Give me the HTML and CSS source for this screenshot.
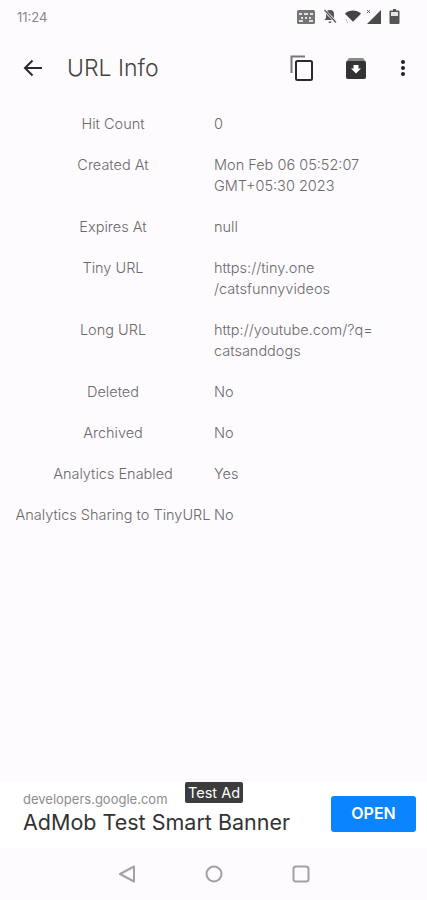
FILE: index.html
```html
<!DOCTYPE html>
<html lang="en">
<head>
  <meta charset="UTF-8">
  <meta name="viewport" content="width=device-width, initial-scale=1.0">
  <title>URL Info</title>
  <link rel="stylesheet" href="styles.css">
</head>
<body>
  <div class="screen">
    <div class="status-bar">
      <span class="clock">11:24</span>
      <div class="status-icons">
        <svg width="18" height="14" viewBox="0 0 18 14"><rect x="0" y="0" width="18" height="14" rx="1.5" fill="#757575"/><path d="M2 3h3v2H2zM7 3h4v2H7zM13 3h3v2h-3zM4 7h2v2H4zM8 7h2v2H8zM12 7h2v2h-2zM2 10h4v2H2zM12 10h4v2h-4z" fill="#e0e0e0"/></svg>
        <svg width="14" height="15" viewBox="0 0 14 15"><path d="M7 1a4 4 0 0 1 4 4v4l1.6 2H1.400L3 9V5a4 4 0 0 1 4-4zM5.500 12.500h3a1.500 1.500 0 0 1-3 0z" fill="#555"/><path d="M1 1l12 12" stroke="#fefbfe" stroke-width="2.600"/><path d="M1.500 1l11.500 12.500" stroke="#555" stroke-width="1.200"/></svg>
        <svg width="16" height="14" viewBox="0 0 17 14"><path d="M0 3.500a12 12 0 0 1 17 0L8.500 12z" fill="#444"/><path d="M1 10h1v1H1zM2 12.500h1v1H2z" fill="#777"/></svg>
        <svg class="signal" width="15" height="15" viewBox="0 0 15 15"><path d="M15 1v14H1z" fill="#4a4a4a"/><path d="M1 1l3 3M4 1L1 4" stroke="#666" stroke-width="1"/></svg>
        <svg width="11" height="15" viewBox="0 0 10 15"><path d="M3.500 0h3v1.500H9a1 1 0 0 1 1 1V14a1 1 0 0 1-1 1H1a1 1 0 0 1-1-1V2.500a1 1 0 0 1 1-1h2.500z" fill="#555"/><rect x="1.500" y="3" width="7" height="4" fill="#e6e6e6"/></svg>
      </div>
    </div>

    <div class="toolbar">
      <svg class="back" width="20" height="18" viewBox="0 0 20 18"><path d="M19 9H2M9.500 1.500L2 9l7.500 7.500" fill="none" stroke="#2b2b2b" stroke-width="2"/></svg>
      <h1>URL Info</h1>
      <div class="actions">
        <svg width="24" height="26" viewBox="0 0 24 26"><path d="M1.500 18V1.500H15" fill="none" stroke="#777" stroke-width="2"/><rect x="6" y="6" width="16" height="19" rx="1.500" fill="none" stroke="#2a2a2a" stroke-width="2"/></svg>
        <svg width="20" height="21" viewBox="0 0 20 21"><path d="M3 0h14l3 4H0z" fill="#8a8a8a"/><rect x="0" y="3" width="20" height="18" rx="2" fill="#333"/><path d="M7.500 7h5v3.500H15L10 15.500 5 10.500h2.500z" fill="#fff"/></svg>
        <svg class="more" width="6" height="18" viewBox="0 0 6 18"><circle cx="3" cy="3" r="2" fill="#222"/><circle cx="3" cy="9" r="2" fill="#222"/><circle cx="3" cy="15" r="2" fill="#222"/></svg>
      </div>
    </div>

    <div class="info-list">
      <div class="info-row"><div class="info-label">Hit Count</div><div class="info-value">0</div></div>
      <div class="info-row"><div class="info-label">Created At</div><div class="info-value">Mon Feb 06 05:52:07<br>GMT+05:30 2023</div></div>
      <div class="info-row"><div class="info-label">Expires At</div><div class="info-value">null</div></div>
      <div class="info-row"><div class="info-label">Tiny URL</div><div class="info-value">https://tiny.one<br>/catsfunnyvideos</div></div>
      <div class="info-row"><div class="info-label">Long URL</div><div class="info-value">http://youtube.com/?q=<br>catsanddogs</div></div>
      <div class="info-row"><div class="info-label">Deleted</div><div class="info-value">No</div></div>
      <div class="info-row"><div class="info-label">Archived</div><div class="info-value">No</div></div>
      <div class="info-row"><div class="info-label">Analytics Enabled</div><div class="info-value">Yes</div></div>
      <div class="info-row"><div class="info-label">Analytics Sharing to TinyURL</div><div class="info-value">No</div></div>
    </div>

    <div class="ad-banner">
      <span class="ad-badge">Test Ad</span>
      <div class="ad-text">
        <div class="ad-domain">developers.google.com</div>
        <div class="ad-title">AdMob Test Smart Banner</div>
      </div>
      <div class="ad-open">OPEN</div>
    </div>

    <div class="nav-bar">
      <svg width="18" height="18" viewBox="0 0 18 18"><path d="M16 1.500v15L2 9z" fill="none" stroke="#a2a2a2" stroke-width="2" stroke-linejoin="round"/></svg>
      <svg width="18" height="18" viewBox="0 0 18 18"><circle cx="9" cy="9" r="7.500" fill="none" stroke="#a2a2a2" stroke-width="2"/></svg>
      <svg width="18" height="18" viewBox="0 0 18 18"><rect x="1.500" y="1.500" width="15" height="15" rx="2.500" fill="none" stroke="#a2a2a2" stroke-width="2"/></svg>
    </div>
  </div>
</body>
</html>
```

FILE: styles.css
```css
body {
  margin: 0;
  padding: 0;
  font-family: Inter, Roboto, sans-serif;
  background: #fefbfe;
  color: #333;
}
.screen {
  display: flex;
  flex-direction: column;
  width: 427px;
  height: 900px;
  overflow: hidden;
}
.status-bar {
  display: flex;
  justify-content: space-between;
  align-items: center;
  height: 33px;
  padding: 0 27px 0 17px;
}
.clock {
  font-size: 13px;
  color: #888;
}
.status-icons {
  display: flex;
  align-items: center;
  gap: 8px;
}
.signal {
  margin-left: -3px;
}
.toolbar {
  display: flex;
  align-items: center;
  height: 70px;
}
.back {
  margin-left: 23px;
}
.toolbar h1 {
  margin: 0 0 0 24px;
  font-size: 23px;
  font-weight: 300;
  color: #444;
}
.actions {
  display: flex;
  align-items: center;
  gap: 32px;
  margin-left: auto;
  margin-right: 21px;
}
.actions .more {
  margin-left: 2px;
}
.info-list {
  flex: 1;
  padding-top: 10px;
}
.info-row {
  display: flex;
  margin-bottom: 20px;
  font-size: 14.500px;
  font-weight: 300;
  line-height: 21px;
  color: #6a6a6a;
}
.info-label {
  width: 196px;
  margin-left: 15px;
  text-align: center;
  white-space: nowrap;
}
.info-value {
  margin-left: 3px;
}
.ad-banner {
  position: relative;
  display: flex;
  justify-content: space-between;
  align-items: center;
  height: 66px;
  padding: 0 11px 0 23px;
  background: #fff;
}
.ad-badge {
  position: absolute;
  top: 0;
  left: 185px;
  padding: 1px 3px;
  border-radius: 2px;
  background: #3c3c3c;
  color: #fff;
  font-size: 14.500px;
  line-height: 19px;
}
.ad-text {
  margin-top: -4px;
}
.ad-domain {
  font-size: 13px;
  color: #8c8c8c;
}
.ad-title {
  margin-top: 2px;
  font-size: 21.500px;
  color: #333;
}
.ad-open {
  width: 85px;
  height: 36px;
  margin-top: -2px;
  border-radius: 3px;
  background: #0a84ff;
  color: #fff;
  font-size: 16px;
  font-weight: 600;
  line-height: 34px;
  text-align: center;
}
.nav-bar {
  display: flex;
  justify-content: center;
  align-items: center;
  gap: 69px;
  height: 52px;
}
```
